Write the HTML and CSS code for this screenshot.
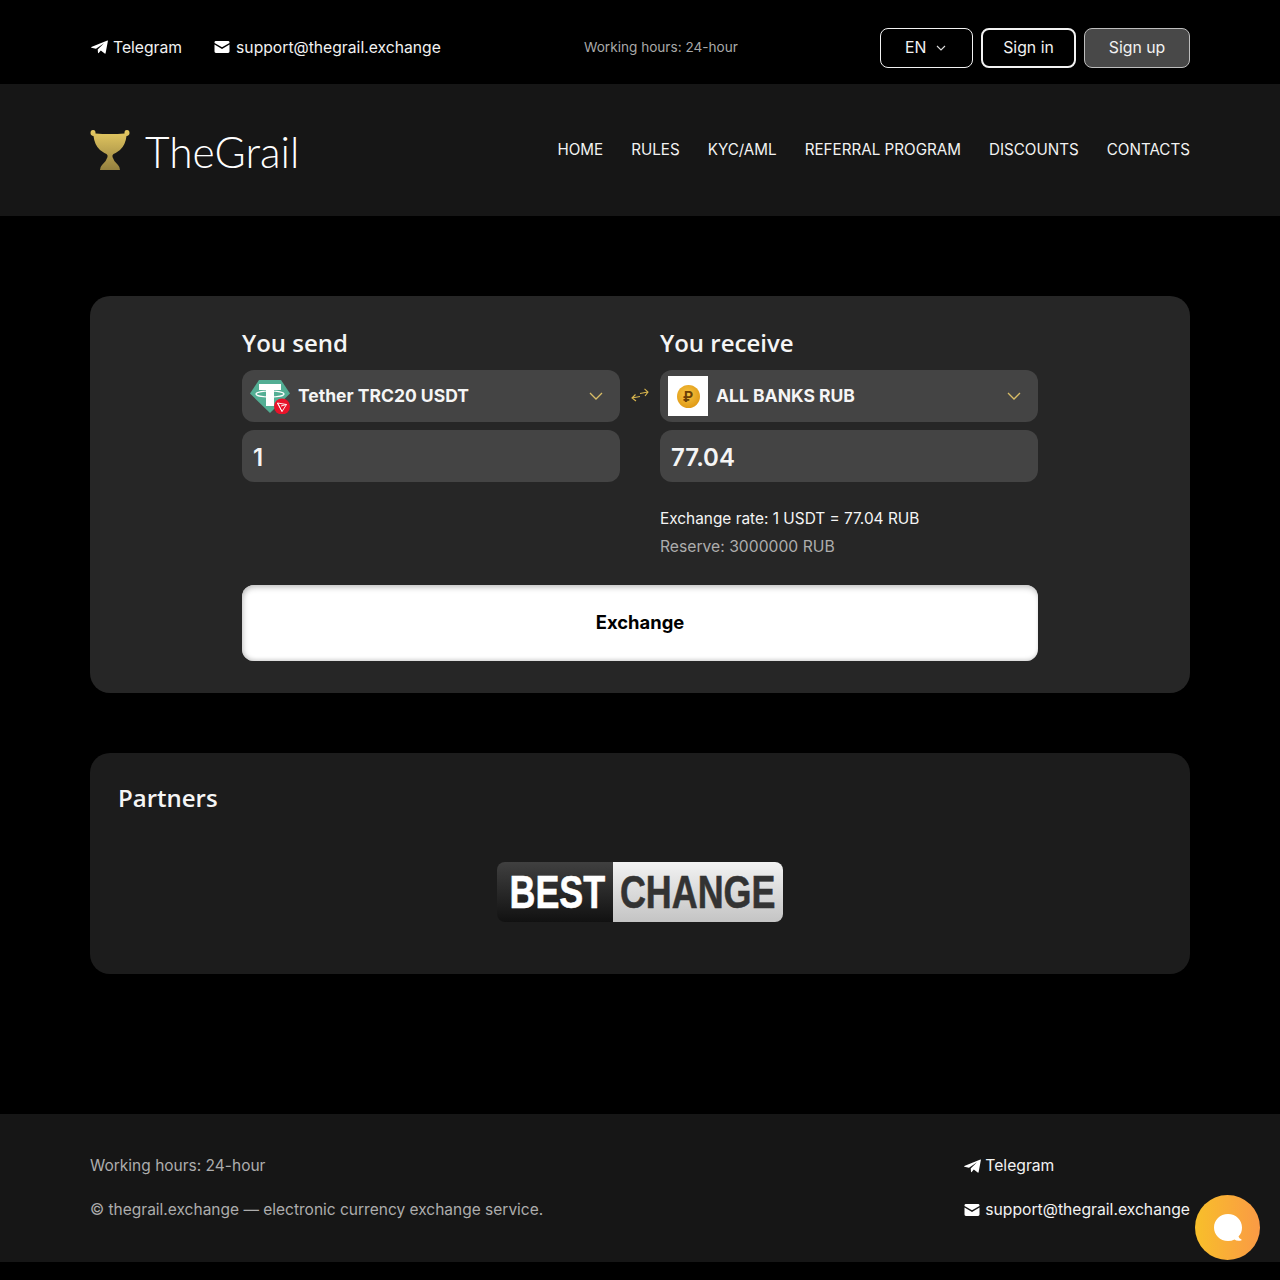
FILE: index.html
```html
<!DOCTYPE html>
<html lang="en">
<head>
    <meta charset="UTF-8">
    <meta name="viewport" content="width=device-width, initial-scale=1.0">
    <title>TheGrail</title>
    <link rel="stylesheet" href="styles.css">
</head>
<body>
    <div class="topbar">
        <div class="container topbar-inner">
            <div class="contacts">
                <a class="contact" href="#">
                    <svg class="icon-tg" viewBox="0 0 17 14"><path d="M0.3 7 L16.4 0.4 Q17 0.3 16.9 1 L14.6 13.3 Q14.4 14 13.7 13.6 L9.8 10.6 L7.7 13 Q7.1 13.4 7 12.7 L6.7 9.6 L13 3.2 L5 8.7 L0.4 7.7 Q-0.1 7.3 0.3 7 Z"/></svg>
                    Telegram
                </a>
                <a class="contact" href="#">
                    <svg class="icon-mail" viewBox="0 0 15 12"><path d="M1.4 0 H13.6 Q15 0 15 1.4 V1.9 L7.5 6.3 L0 1.9 V1.4 Q0 0 1.4 0 Z M0 3.5 L7.5 7.9 L15 3.5 V10.6 Q15 12 13.6 12 H1.4 Q0 12 0 10.6 Z"/></svg>
                    support@thegrail.exchange
                </a>
            </div>
            <div class="hours">Working hours: 24-hour</div>
            <div class="actions">
                <button class="btn btn-lang">EN
                    <svg class="icon-small-chevron" viewBox="0 0 10 6"><path d="M1 1 L5 5 L9 1"/></svg>
                </button>
                <button class="btn btn-signin">Sign in</button>
                <button class="btn btn-signup">Sign up</button>
            </div>
        </div>
    </div>

    <header class="header">
        <div class="container header-inner">
            <a class="logo" href="#">
                <svg class="logo-cup" viewBox="0 0 40 40">
                    <defs>
                        <linearGradient id="cupGold" x1="0" y1="0" x2="0" y2="1">
                            <stop offset="0" stop-color="#e6ca62"/>
                            <stop offset="1" stop-color="#94803f"/>
                        </linearGradient>
                    </defs>
                    <path fill="url(#cupGold)" d="M0.5 3 Q0.5 0 3 0 Q5.8 0 5.5 3.4 Q12 4 20 4 Q28 4 34.5 3.4 Q34.2 0 37 0 Q39.5 0 39.5 3 Q39.5 5.5 36.5 6 Q35.5 15 30 20 Q26 23 23.5 24 Q22 25 22.5 27 Q23.5 31 28 35 Q30 37 30 40 H10 Q10 37 12 35 Q16.5 31 17.5 27 Q18 25 16.5 24 Q14 23 10 20 Q4.5 15 3.5 6 Q0.5 5.5 0.5 3 Z"/>
                </svg>
                <span class="logo-text">TheGrail</span>
            </a>
            <nav class="nav">
                <a href="#">HOME</a>
                <a href="#">RULES</a>
                <a href="#">KYC/AML</a>
                <a href="#">REFERRAL PROGRAM</a>
                <a href="#">DISCOUNTS</a>
                <a href="#">CONTACTS</a>
            </nav>
        </div>
    </header>

    <main class="container main">
        <section class="exchange-card">
            <div class="exchange-form">
                <div class="exchange-cols">
                    <div class="col">
                        <h2 class="col-title">You send</h2>
                        <div class="select">
                            <svg class="coin-tether" viewBox="0 0 40 36">
                                <path fill="#53ae94" d="M9 2 H31 L40 15.5 L20 35 L0 15.5 Z"/>
                                <path fill="#fff" d="M9 6 H31 V12 H24 V28 H16 V12 H9 Z"/>
                                <ellipse cx="20" cy="16" rx="14" ry="3" fill="none" stroke="#fff" stroke-width="1.2"/>
                                <circle cx="32" cy="28.5" r="8" fill="#e8132a"/>
                                <path fill="none" stroke="#fff" stroke-width="0.9" d="M27.5 25 L36.5 26.5 L32 33.5 Z M27.5 25 L32 33.5 M36.5 26.5 L31 28"/>
                            </svg>
                            <span class="select-label">Tether TRC20 USDT</span>
                            <svg class="chevron" viewBox="0 0 14 8"><path d="M1 1 L7 7 L13 1"/></svg>
                        </div>
                        <div class="amount">1</div>
                    </div>
                    <div class="swap">
                        <svg class="swap-icon" viewBox="0 0 18 14"><path d="M9 5.5 L17 4 M13.5 0.8 L17 4 L14 8 M1 10 L9 8.5 M4.5 6.5 L1 10 L5 13"/></svg>
                    </div>
                    <div class="col">
                        <h2 class="col-title">You receive</h2>
                        <div class="select">
                            <div class="coin-box">
                                <div class="coin-rub">₽</div>
                            </div>
                            <span class="select-label">ALL BANKS RUB</span>
                            <svg class="chevron" viewBox="0 0 14 8"><path d="M1 1 L7 7 L13 1"/></svg>
                        </div>
                        <div class="amount">77.04</div>
                        <p class="rate">Exchange rate: 1 USDT = 77.04 RUB</p>
                        <p class="reserve">Reserve: 3000000 RUB</p>
                    </div>
                </div>
                <button class="btn-exchange">Exchange</button>
            </div>
        </section>

        <section class="partners">
            <h2 class="partners-title">Partners</h2>
            <div class="partners-logos">
                <a class="bestchange" href="#">
                    <span class="bc-best"><span class="bc-word">BEST</span></span>
                    <span class="bc-change"><span class="bc-word">CHANGE</span></span>
                </a>
            </div>
        </section>
    </main>

    <footer class="footer">
        <div class="container footer-inner">
            <div class="footer-left">
                <div>Working hours: 24-hour</div>
                <div>© thegrail.exchange — electronic currency exchange service.</div>
            </div>
            <div class="footer-right">
                <a class="contact" href="#">
                    <svg class="icon-tg" viewBox="0 0 17 14"><path d="M0.3 7 L16.4 0.4 Q17 0.3 16.9 1 L14.6 13.3 Q14.4 14 13.7 13.6 L9.8 10.6 L7.7 13 Q7.1 13.4 7 12.7 L6.7 9.6 L13 3.2 L5 8.7 L0.4 7.7 Q-0.1 7.3 0.3 7 Z"/></svg>
                    Telegram
                </a>
                <a class="contact" href="#">
                    <svg class="icon-mail" viewBox="0 0 15 12"><path d="M1.4 0 H13.6 Q15 0 15 1.4 V1.9 L7.5 6.3 L0 1.9 V1.4 Q0 0 1.4 0 Z M0 3.5 L7.5 7.9 L15 3.5 V10.6 Q15 12 13.6 12 H1.4 Q0 12 0 10.6 Z"/></svg>
                    support@thegrail.exchange
                </a>
            </div>
        </div>
    </footer>

    <a class="chat" href="#">
        <svg viewBox="0 0 30 30"><path fill="#fff" d="M15 1 C23 1 29 7 29 14.5 C29 18 28 21 25.5 23.5 Q26 25.5 28.5 26.5 Q29 27.5 28 27.6 Q23.5 28.3 21.5 26.5 Q18.5 28 15 28 C7 28 1 22 1 14.5 C1 7 7 1 15 1 Z"/></svg>
    </a>
</body>
</html>
```

FILE: styles.css
```css
* {
    box-sizing: border-box;
}
html, body {
    margin: 0;
    padding: 0;
}
body {
    background-color: #000;
    color: #fff;
    font-family: Inter, "Liberation Sans", sans-serif;
    font-size: 16px;
    padding-bottom: 18px;
}
a {
    color: inherit;
    text-decoration: none;
}
.container {
    width: 1100px;
    margin: 0 auto;
}

/* top bar */
.topbar {
    height: 84px;
    padding-top: 12px;
    background-color: #000;
}
.topbar-inner {
    height: 100%;
    display: flex;
    align-items: center;
}
.contacts {
    display: flex;
    gap: 32px;
    width: 494px;
    padding-bottom: 2px;
}
.contact {
    display: flex;
    align-items: center;
    gap: 5px;
    font-size: 15.7px;
    color: #f2f2f2;
    white-space: nowrap;
}
.icon-tg {
    width: 17px;
    height: 14px;
    margin-left: 1px;
    fill: #fff;
}
.icon-mail {
    width: 16px;
    height: 12px;
    fill: #fff;
}
.contacts .contact:last-child {
    gap: 6px;
}
.hours {
    padding-bottom: 2px;
    font-size: 13.6px;
    color: #a9a9a9;
}
.actions {
    display: flex;
    gap: 8px;
    margin-left: auto;
}
.btn {
    height: 40px;
    border-radius: 8px;
    background: transparent;
    color: #f2f2f2;
    font-family: inherit;
    font-size: 15.8px;
    padding: 0 0 1px;
    cursor: pointer;
}
.btn-lang {
    width: 93px;
    padding-right: 2px;
    border: 1px solid #f2f2f2;
}
.icon-small-chevron {
    width: 10px;
    height: 6px;
    margin-left: 5px;
    vertical-align: 2px;
    fill: none;
    stroke: #ddd;
    stroke-width: 1.1;
}
.btn-signin {
    width: 95px;
    border: 2px solid #f2f2f2;
}
.btn-signup {
    width: 106px;
    border: 1px solid #bdbdbd;
    background-color: #484848;
}

/* header */
.header {
    height: 132px;
    background-color: #161616;
}
.header-inner {
    height: 100%;
    display: flex;
    align-items: center;
    justify-content: space-between;
}
.logo {
    display: flex;
    align-items: center;
    gap: 15px;
}
.logo-cup {
    width: 40px;
    height: 40px;
    margin-top: -1px;
}
.logo-text {
    font-family: Lato, sans-serif;
    font-weight: 300;
    font-size: 42.5px;
    line-height: 48px;
    color: #fff;
    margin-top: 3px;
}
.nav {
    display: flex;
    gap: 28px;
    font-size: 15.2px;
    color: #f2f2f2;
    margin-top: -1px;
}

/* exchange */
.main {
    padding-top: 80px;
}
.exchange-card {
    height: 397px;
    background-color: #262626;
    border-radius: 20px;
    padding-top: 30px;
}
.exchange-form {
    width: 796px;
    margin: 0 auto;
}
.exchange-cols {
    display: flex;
    height: 259px;
}
.col {
    width: 378px;
}
.swap {
    width: 40px;
    padding-top: 62px;
    display: flex;
    justify-content: center;
    align-items: flex-start;
}
.swap-icon {
    width: 18px;
    height: 14px;
    fill: none;
    stroke: #d9b64e;
    stroke-width: 1.1;
}
.col-title {
    margin: 0 0 10px;
    font-family: "Open Sans", sans-serif;
    font-size: 24px;
    font-weight: 600;
    line-height: 34px;
    color: #f5f5f5;
}
.select {
    height: 52px;
    background-color: #444;
    border-radius: 12px;
    display: flex;
    align-items: center;
    padding: 0 16px 0 8px;
}
.coin-tether {
    width: 40px;
    height: 36px;
    flex-shrink: 0;
}
.select-label {
    margin-left: 8px;
    margin-top: -2px;
    font-size: 17.5px;
    font-weight: 700;
    color: #f5f5f5;
}
.chevron {
    width: 14px;
    height: 8px;
    margin-left: auto;
    margin-right: 1px;
    fill: none;
    stroke: #d9bd66;
    stroke-width: 1.3;
}
.coin-box {
    width: 40px;
    height: 40px;
    flex-shrink: 0;
    background-color: #fff;
    display: flex;
    align-items: center;
    justify-content: center;
}
.coin-rub {
    width: 23px;
    height: 23px;
    border-radius: 50%;
    background: radial-gradient(circle at 45% 40%, #f7c543, #e09a16 75%, #b97508);
    color: #6b3f06;
    font-size: 14px;
    font-weight: 700;
    line-height: 23px;
    text-align: center;
}
.amount {
    height: 52px;
    margin-top: 8px;
    padding-left: 11px;
    background-color: #444;
    border-radius: 12px;
    font-size: 24px;
    font-weight: 600;
    line-height: 56px;
    color: #f5f5f5;
}
.rate, .reserve {
    margin: 0;
    line-height: 28px;
}
.rate {
    margin-top: 23px;
    font-size: 15.4px;
    color: #f5f5f5;
}
.reserve {
    font-size: 15.7px;
    color: #adadad;
}
.btn-exchange {
    display: block;
    width: 100%;
    height: 76px;
    padding: 0 0 2px;
    border: none;
    border-radius: 12px;
    background-color: #fff;
    box-shadow: inset 0 5px 6px -3px #bbb, inset 5px 0 6px -4px #ccc, inset 0 -3px 4px -2px #ccc;
    color: #000;
    font-family: inherit;
    font-size: 18.4px;
    font-weight: 700;
    cursor: pointer;
}

/* partners */
.partners {
    height: 221px;
    margin-top: 60px;
    padding: 28px;
    background-color: #1c1c1c;
    border-radius: 20px;
}
.partners-title {
    margin: 0;
    font-family: "Open Sans", sans-serif;
    font-size: 24px;
    font-weight: 600;
    line-height: 34px;
    color: #f5f5f5;
}
.partners-logos {
    display: flex;
    justify-content: center;
    margin-top: 47px;
}
.bestchange {
    display: flex;
    width: 286px;
    height: 60px;
    border-radius: 8px;
    overflow: hidden;
    font-family: "Liberation Sans", sans-serif;
    font-weight: 700;
    font-size: 46px;
    -webkit-text-stroke: 0.6px;
}
.bc-best, .bc-change {
    display: flex;
    align-items: center;
    justify-content: center;
}
.bc-best {
    width: 116px;
    padding-left: 4px;
    color: #fff;
    background: linear-gradient(#404040, #111);
}
.bc-change {
    width: 170px;
    color: #333;
    background: linear-gradient(#f2f2f2, #c4c4c4);
}
.bc-word {
    display: block;
    transform: scaleX(0.78);
}

/* footer */
.footer {
    height: 148px;
    margin-top: 140px;
    background-color: #161616;
}
.footer-inner {
    height: 100%;
    display: flex;
    justify-content: space-between;
    padding: 30px 0 0;
    font-size: 15.5px;
    line-height: 44px;
}
.footer-inner > div {
    display: flex;
    flex-direction: column;
    justify-content: flex-start;
}
.footer-inner .contact,
.footer-left div {
    height: 44px;
    line-height: 44px;
}
.footer-right .contact {
    gap: 4px;
}
.footer-right .contact:last-child {
    gap: 5px;
}
.footer-right .icon-tg {
    margin-left: 0;
}
.footer-left {
    color: #adadad;
}

/* chat widget */
.chat {
    position: fixed;
    left: 1195px;
    top: 1195px;
    width: 65px;
    height: 65px;
    border-radius: 50%;
    background: linear-gradient(90deg, #f8bf2a, #fa9a45);
    display: flex;
    align-items: center;
    justify-content: center;
}
.chat svg {
    width: 30px;
    height: 30px;
}
```
